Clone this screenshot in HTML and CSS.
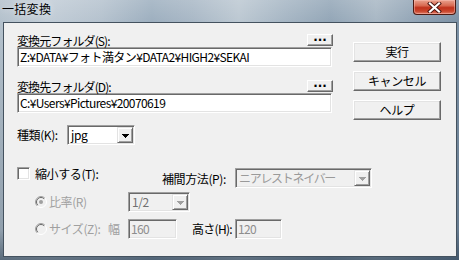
FILE: index.html
```html
<!DOCTYPE html>
<html lang="ja">
<head>
<meta charset="utf-8">
<title>一括変換</title>
<link rel="stylesheet" href="styles.css">
</head>
<body>
<div class="window">
  <div class="titlebar">
    <span class="title">一括変換</span>
    <span class="close">
      <svg width="15" height="11" viewBox="0 0 15 11"><path d="M3 1.5L12 9.5M12 1.5L3 9.5" stroke="#4a1410" stroke-width="4" stroke-linecap="square"/><path d="M3 1.5L12 9.5M12 1.5L3 9.5" stroke="#ffffff" stroke-width="2.2" stroke-linecap="square"/></svg>
    </span>
  </div>
  <div class="client">
    <div class="top">
      <div class="folders">
        <div class="lrow"><span class="flabel">変換元フォルダ(S):</span><span class="browse">···</span></div>
        <div class="tbox">Z:¥DATA¥フォト満タン¥DATA2¥HIGH2¥SEKAI</div>
        <div class="lrow lrow2"><span class="flabel">変換先フォルダ(D):</span><span class="browse">···</span></div>
        <div class="tbox">C:¥Users¥Pictures¥20070619</div>
        <div class="kind">
          <span class="klabel">種類(K):</span>
          <div class="combo combo-kind">
            <span class="cval">jpg</span>
            <span class="cbtn"><svg width="7" height="4" viewBox="0 0 7 4" shape-rendering="crispEdges"><path d="M0 0h7v1h-1v1h-1v1h-1v1h-1v-1h-1v-1h-1v-1h-1z" fill="#000"/></svg></span>
          </div>
        </div>
      </div>
      <div class="actions">
        <span class="btn">実行</span>
        <span class="btn">キャンセル</span>
        <span class="btn">ヘルプ</span>
      </div>
    </div>
    <div class="resize">
      <div class="row3">
        <div class="chkgroup"><span class="chk"></span><span>縮小する(T):</span></div>
        <span class="interp">補間方法(P):</span>
        <div class="combo combo-interp disabled">
          <span class="cval narrow">ニアレストネイバー</span>
          <span class="cbtn"><svg width="7" height="4" viewBox="0 0 7 4" shape-rendering="crispEdges"><path d="M0 0h7v1h-1v1h-1v1h-1v1h-1v-1h-1v-1h-1v-1h-1z" fill="#a0a0a0"/></svg></span>
        </div>
      </div>
      <div class="row4">
        <span class="radio"><svg width="12" height="12" viewBox="0 0 12 12"><circle cx="6" cy="6" r="5.5" fill="#f0f0f0" stroke="#ffffff"/><path d="M2.1 9.9A5.5 5.5 0 0 1 9.9 2.1" fill="none" stroke="#a0a0a0"/><path d="M2.8 9.2A4.5 4.5 0 0 1 9.2 2.8" fill="none" stroke="#696969"/><circle cx="6" cy="6" r="2" fill="#a0a0a0"/></svg></span>
        <span class="dlabel l-ratio">比率(R)</span>
        <div class="combo combo-ratio disabled">
          <span class="cval dark">1/2</span>
          <span class="cbtn"><svg width="7" height="4" viewBox="0 0 7 4" shape-rendering="crispEdges"><path d="M0 0h7v1h-1v1h-1v1h-1v1h-1v-1h-1v-1h-1v-1h-1z" fill="#a0a0a0"/></svg></span>
        </div>
      </div>
      <div class="row5">
        <span class="radio"><svg width="12" height="12" viewBox="0 0 12 12"><circle cx="6" cy="6" r="5.5" fill="#f0f0f0" stroke="#ffffff"/><path d="M2.1 9.9A5.5 5.5 0 0 1 9.9 2.1" fill="none" stroke="#a0a0a0"/><path d="M2.8 9.2A4.5 4.5 0 0 1 9.2 2.8" fill="none" stroke="#696969"/></svg></span>
        <span class="dlabel l-size">サイズ(Z):</span>
        <span class="dlabel l-w">幅</span>
        <div class="tbox small w160 disabled">160</div>
        <span class="l-h">高さ(H):</span>
        <div class="tbox small w120 disabled">120</div>
      </div>
    </div>
  </div>
</div>
</body>
</html>
```
FILE: styles.css
```css
* { box-sizing: border-box; }
html, body { margin: 0; padding: 0; }
body {
  width: 459px;
  height: 260px;
  overflow: hidden;
  font-family: "Noto Sans CJK JP", "Liberation Sans", sans-serif;
  font-size: 12px;
  letter-spacing: -0.4px;
  color: #000;
}
.window {
  width: 459px;
  height: 260px;
  display: flex;
  flex-direction: column;
  background:
    linear-gradient(180deg, rgba(255,255,255,0.15) 0px, rgba(255,255,255,0) 22px, rgba(40,60,80,0.25) 230px, rgba(30,50,70,0.6) 260px),
    linear-gradient(90deg, #b4c1cc 0%, #c2cdd7 10%, #b5c2ce 22%, #9dafbf 33%, #a9b8c6 42%, #bcc8d2 52%, #a6b6c4 62%, #93a6b7 72%, #a8b7c4 82%, #8ea1b3 92%, #7c91a5 100%);
}
.titlebar {
  height: 22px;
  display: flex;
  align-items: flex-start;
}
.title {
  margin: 2px 0 0 2px;
  line-height: 14px;
  font-size: 12px;
  letter-spacing: 0.3px;
  text-shadow: 0 0 6px rgba(255,255,255,0.7);
}
.close {
  margin-left: auto;
  margin-right: 3px;
  width: 43px;
  height: 15px;
  border: 1px solid #4d1a12;
  border-top: none;
  border-radius: 0 0 4px 4px;
  background: linear-gradient(180deg, #e9a28e 0%, #d86a52 40%, #c0321c 55%, #c9452c 80%, #e0806a 100%);
  box-shadow: inset 0 0 0 1px rgba(255,200,190,0.45);
  display: flex;
  align-items: center;
  justify-content: center;
}
.client {
  margin-left: 3px;
  width: 454px;
  height: 235px;
  border: 1px solid #44525f;
  background: #f0f0f0;
}
.top {
  display: flex;
  padding-left: 13px;
}
.folders {
  width: 315px;
  padding-top: 11px;
}
.lrow {
  height: 13px;
  line-height: 13px;
  display: flex;
  justify-content: space-between;
  align-items: flex-start;
}
.flabel { letter-spacing: -0.9px; }
.lrow2 { margin-top: 13px; }
.browse {
  width: 26px;
  height: 12px;
  margin-right: -1px;
  border: 1px solid;
  border-color: #ffffff #696969 #696969 #ffffff;
  box-shadow: inset -1px -1px 0 #a0a0a0;
  background: #f0f0f0;
  font-family: "DejaVu Sans", sans-serif;
  font-weight: bold;
  font-size: 12px;
  line-height: 10px;
  letter-spacing: 0;
  text-align: center;
  overflow: hidden;
}
.tbox {
  height: 20px;
  width: 315px;
  border: 1px solid;
  border-color: #a0a0a0 #ffffff #ffffff #a0a0a0;
  box-shadow: inset 1px 1px 0 #696969, inset -1px -1px 0 #e3e3e3;
  background: #ffffff;
  padding: 1px 0 0 2px;
  line-height: 16px;
  letter-spacing: -0.6px;
  white-space: nowrap;
  overflow: hidden;
}
.tbox.disabled {
  background: #f0f0f0;
  color: #8d8d8d;
}
.kind {
  margin-top: 12px;
  display: flex;
  align-items: center;
}
.klabel { width: 50px; line-height: 20px; }
.combo {
  height: 20px;
  border: 1px solid;
  border-color: #a0a0a0 #ffffff #ffffff #a0a0a0;
  box-shadow: inset 1px 1px 0 #696969, inset -1px -1px 0 #e3e3e3;
  background: #ffffff;
  display: flex;
  align-items: center;
  padding: 1px 1px 1px 2px;
}
.combo.disabled { background: #f0f0f0; }
.combo-kind { width: 68px; }
.cval {
  flex: 1;
  line-height: 16px;
  padding-left: 1px;
  white-space: nowrap;
  overflow: hidden;
}
.combo.disabled .cval { color: #9a9a9a; }
.combo.disabled .cval.dark { color: #707070; }
.cval.narrow { letter-spacing: -1.3px; }
.cbtn {
  width: 16px;
  height: 16px;
  border: 1px solid;
  border-color: #e3e3e3 #696969 #696969 #e3e3e3;
  box-shadow: inset 1px 1px 0 #ffffff, inset -1px -1px 0 #a0a0a0;
  background: #f0f0f0;
  display: flex;
  align-items: center;
  justify-content: center;
  padding-top: 1px;
}
.actions {
  margin-left: 21px;
  padding-top: 19px;
  display: flex;
  flex-direction: column;
  gap: 9px;
}
.btn {
  width: 88px;
  height: 20px;
  border: 1px solid;
  border-color: #ffffff #696969 #696969 #ffffff;
  box-shadow: inset -1px -1px 0 #a0a0a0, inset 1px 1px 0 #e3e3e3;
  background: #f0f0f0;
  text-align: center;
  line-height: 17px;
}
.resize { padding-left: 13px; }
.row3 {
  margin-top: 22px;
  height: 21px;
  display: flex;
  align-items: flex-start;
}
.chkgroup {
  width: 145px;
  display: flex;
  align-items: center;
  line-height: 13px;
  white-space: nowrap;
}
.chk {
  width: 13px;
  height: 13px;
  margin-right: 5px;
  border: 1px solid;
  border-color: #a0a0a0 #ffffff #ffffff #a0a0a0;
  box-shadow: inset 1px 1px 0 #696969, inset -1px -1px 0 #e3e3e3;
  background: #ffffff;
}
.interp {
  width: 73px;
  margin-top: 1px;
  line-height: 20px;
  padding-top: 1px;
  white-space: nowrap;
}
.combo-interp { width: 137px; margin-top: 1px; }
.row4 {
  margin-top: 4px;
  display: flex;
  align-items: center;
}
.row5 {
  margin-top: 7px;
  display: flex;
  align-items: center;
}
.radio {
  width: 12px;
  height: 12px;
  margin-left: 18px;
  display: flex;
}
.dlabel { color: #a0a0a0; line-height: 20px; white-space: nowrap; }
.l-ratio { width: 81px; padding-left: 2px; }
.l-size { width: 61px; padding-left: 2px; }
.l-w { width: 20px; }
.combo-ratio { width: 62px; }
.tbox.small { width: 49px; padding-left: 2px; }
.tbox.w120 { width: 47px; }
.l-h { margin-left: 15px; width: 43px; line-height: 20px; white-space: nowrap; letter-spacing: -0.7px; }
```
